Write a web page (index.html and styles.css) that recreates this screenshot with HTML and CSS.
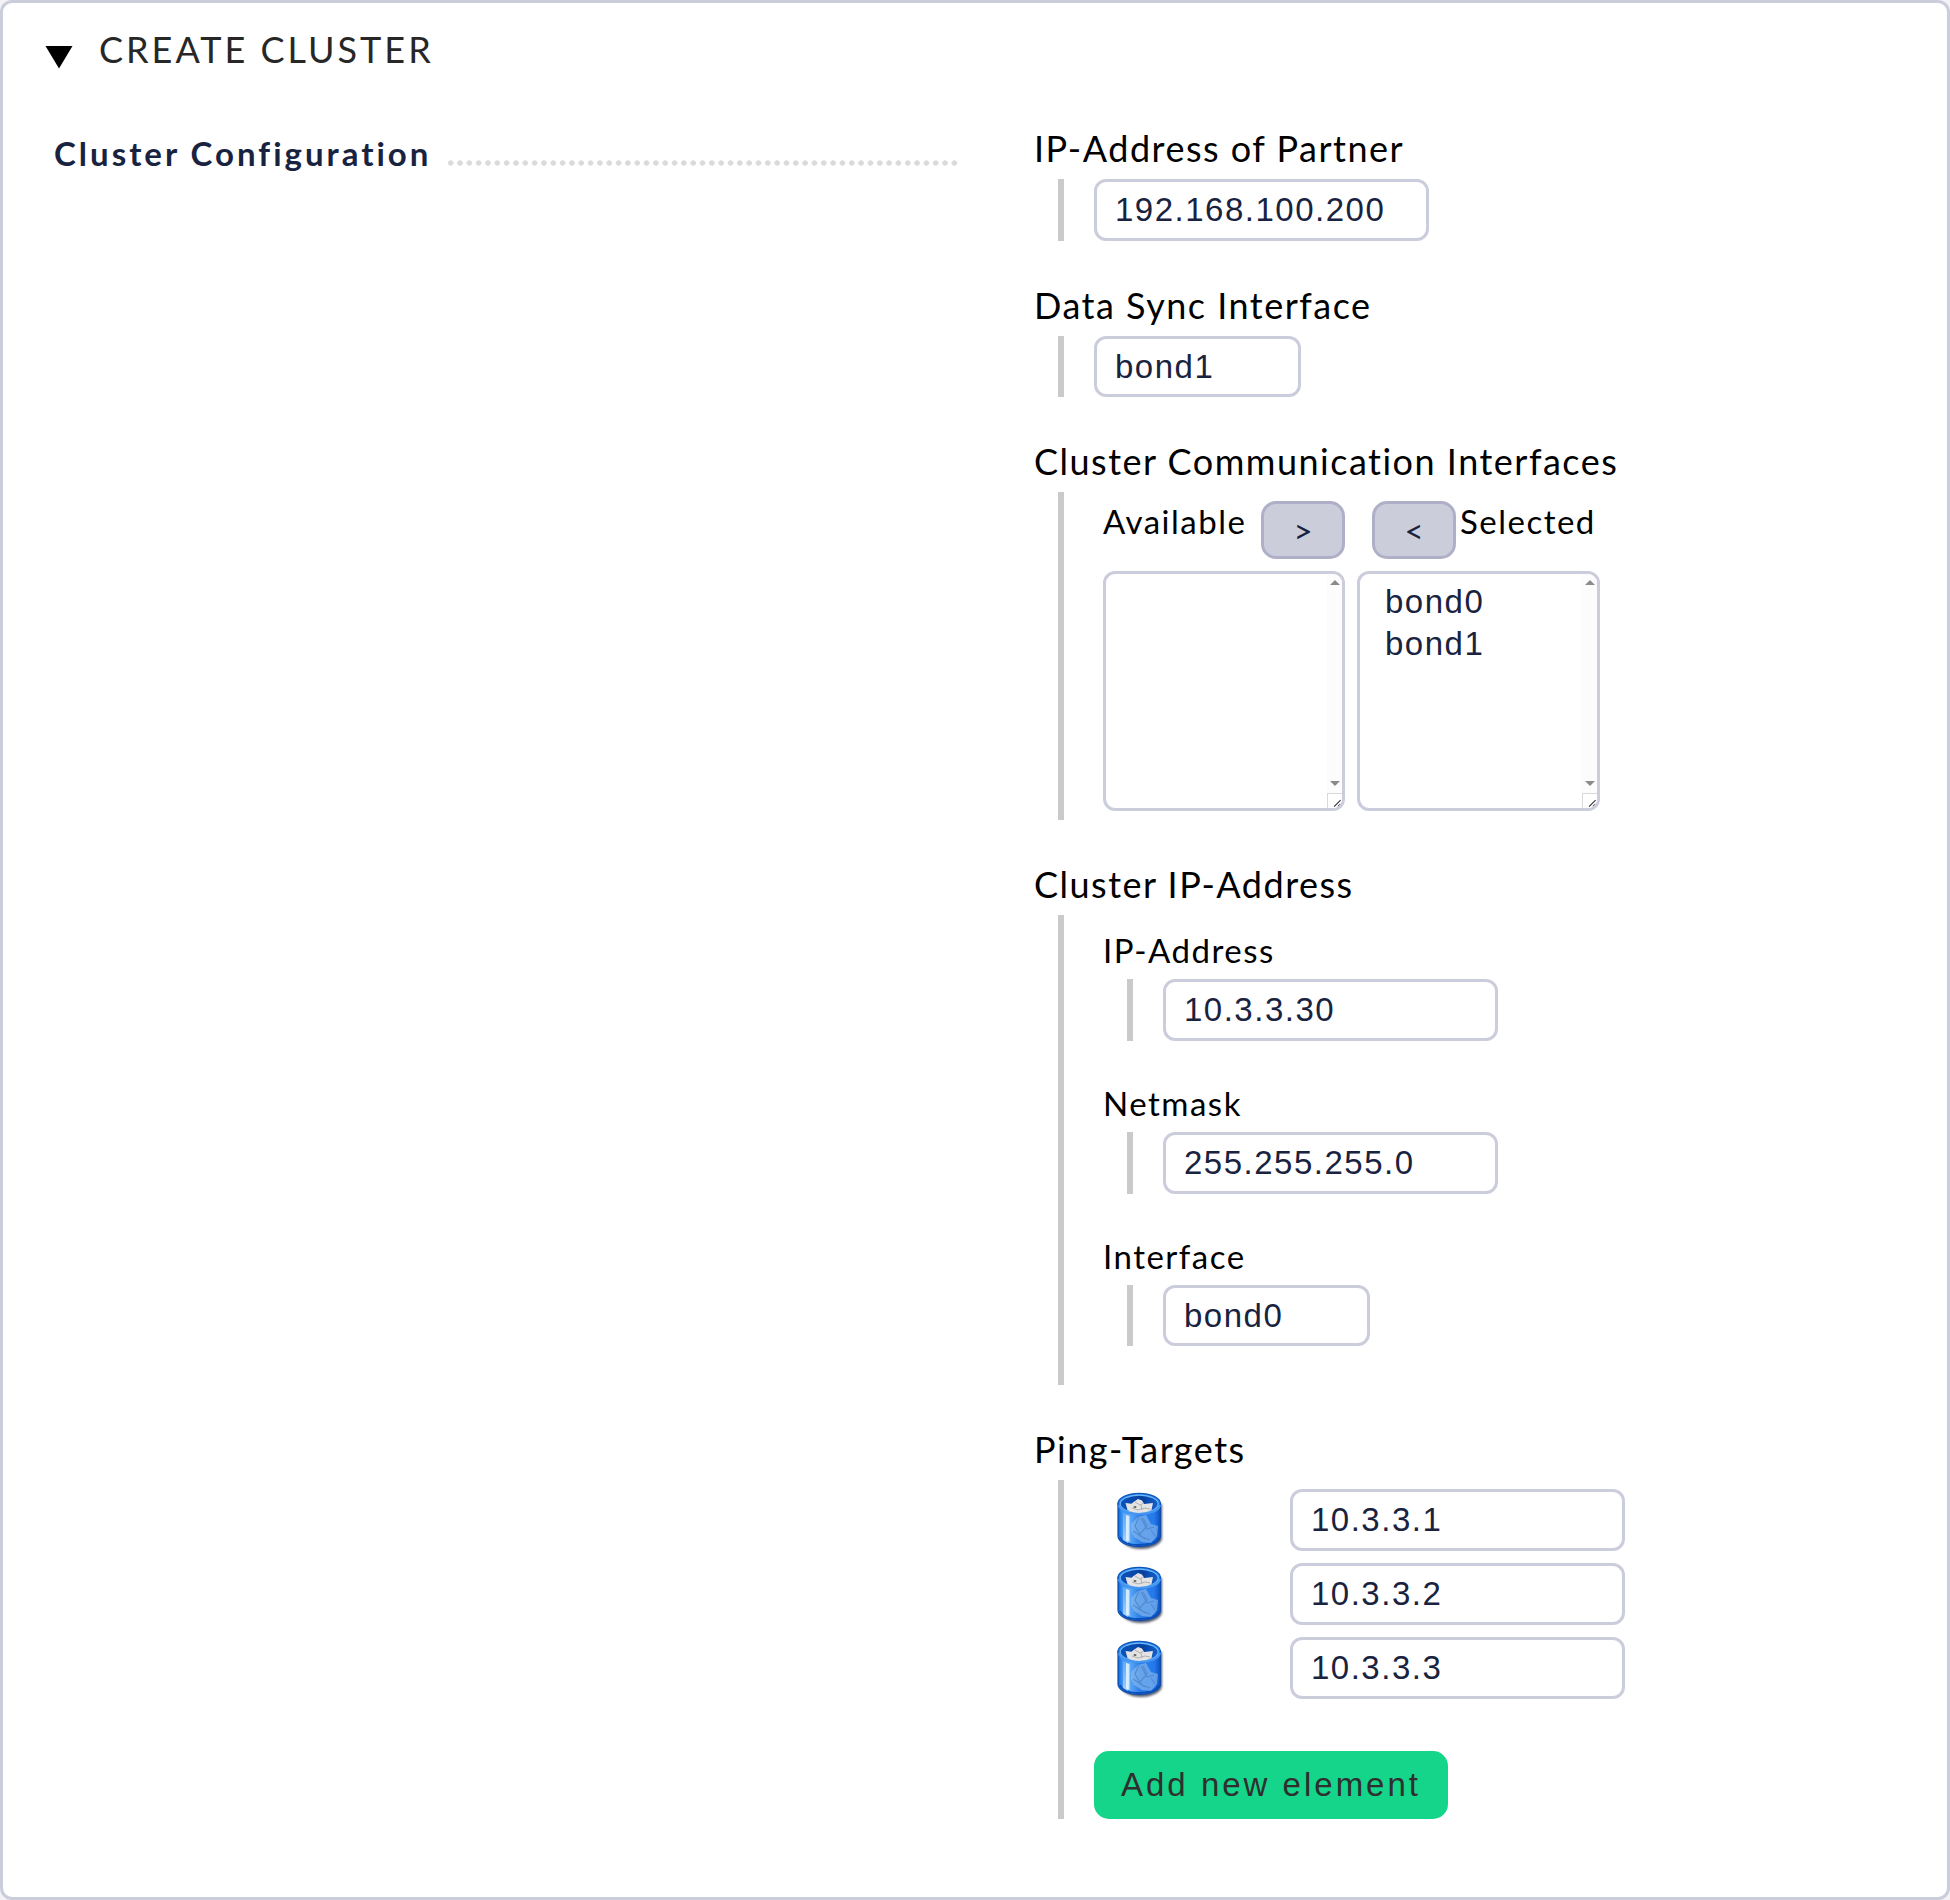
FILE: index.html
```html
<!DOCTYPE html>
<html lang="en">
<head>
<meta charset="utf-8">
<title>Create Cluster</title>
<link rel="stylesheet" href="styles.css">
</head>
<body>
<svg class="defs" width="0" height="0" aria-hidden="true">
  <defs>
    <linearGradient id="can-body" x1="0" x2="1" y1="0" y2="0">
      <stop offset="0" stop-color="#0d62d8"/><stop offset=".1" stop-color="#3d95f4"/>
      <stop offset=".28" stop-color="#5ba8f6"/><stop offset=".5" stop-color="#2f80e6"/>
      <stop offset=".85" stop-color="#2579ec"/><stop offset="1" stop-color="#0b50bc"/>
    </linearGradient>
    <linearGradient id="can-inside" x1="0" x2="1" y1="0" y2="0">
      <stop offset="0" stop-color="#0b54bd"/><stop offset=".6" stop-color="#07409f"/><stop offset="1" stop-color="#1263cf"/>
    </linearGradient>
    <linearGradient id="can-shine" x1="0" x2="0" y1="0" y2="1">
      <stop offset="0" stop-color="#a5d2fc" stop-opacity=".5"/><stop offset="1" stop-color="#e2f2ff"/>
    </linearGradient>
    <filter id="soft" x="-20%" y="-20%" width="140%" height="140%"><feGaussianBlur stdDeviation="1"/></filter>
    <filter id="hazy" x="-20%" y="-20%" width="140%" height="140%"><feGaussianBlur stdDeviation=".6"/></filter>
    <symbol id="trash" viewBox="0 0 50 60">
      <path d="M6 13v34c0 6 9 11 20 11s21-5 21-11V13z" fill="#222a3c" opacity=".75" filter="url(#soft)"/>
      <path d="M3 12v33c0 6 9 10.500 21 10.500S45.500 51 45.500 45V12z" fill="url(#can-body)" stroke="#0d4cab" stroke-width="1.200"/>
      <path d="M5 46c2 5 9 8 19 8s18-3 20-8" fill="none" stroke="#0a4fbc" stroke-width="2"/>
      <path d="M8 22l5 2v28l-5-3z" fill="url(#can-shine)" opacity=".6"/>
      <path d="M11 24l3.500 1v26l-3.500-1.500z" fill="#e6f4ff" opacity=".85"/>
      <g filter="url(#hazy)">
        <path d="M16 33l7-7 8-2 5 9 7 2-1 10-6 7-9-1-8-5-3-6z" fill="#8dbcec" opacity=".6"/>
        <path d="M24 26l-4 9 5 9 5 4m-4-21l6 11 7-2m-21 4l9 6 8 3m-7-22l4 8-7 8m11-4l4 6" fill="none" stroke="#4c87cf" stroke-width="1.200" opacity=".85"/>
      </g>
      <ellipse cx="24.200" cy="12.500" rx="21.200" ry="10.200" fill="#2a82ea" stroke="#0e55bb" stroke-width="1.200"/>
      <ellipse cx="24.200" cy="13" rx="19" ry="8.800" fill="url(#can-inside)" stroke="#6cb6fb" stroke-width="1.200"/>
      <path d="M10.500 12l6 .8 2-1.800 4.500-3 4 1.500 2 3.500 9-1-1.500 7c-3 2-8 3-12.500 3s-9-1-11.500-3z" fill="#e3e3e3"/>
      <path d="M20 11l5 3 4-2M17 17l6 2 7-2 5 1M26 14l1 5" fill="none" stroke="#b0b0b0" stroke-width="1"/>
      <ellipse cx="20" cy="16" rx="1.500" ry="1" fill="#606060"/>
      <path d="M4 14c1 5.500 9 9 20 9S44 19.500 45 14" fill="none" stroke="#4595f2" stroke-width="2.200"/>
    </symbol>
    <symbol id="grip" viewBox="0 0 15 15">
      <path d="M6.500 13.500l7-7M10.500 13.500l3-3" stroke="#333" stroke-width="1.200" fill="none"/>
    </symbol>
  </defs>
</svg>
<main class="panel">
  <h1 class="title"><svg class="caret" viewBox="0 0 28 24"><path d="M.5 1h27L14 23.500z"/></svg>CREATE CLUSTER</h1>
  <div class="columns">
    <div class="legend"><span class="legend-text">Cluster Configuration</span><span class="leader"></span></div>
    <div class="form">
      <section class="field">
        <h2 class="label">IP-Address of Partner</h2>
        <div class="group"><div class="input">192.168.100.200</div></div>
      </section>
      <section class="field">
        <h2 class="label">Data Sync Interface</h2>
        <div class="group"><div class="input select">bond1</div></div>
      </section>
      <section class="field">
        <h2 class="label">Cluster Communication Interfaces</h2>
        <div class="group transfer">
          <div class="side">
            <div class="side-head"><span>Available</span><span class="move">&gt;</span></div>
            <div class="list"><div class="options"></div><div class="scroll"><i class="up"></i><i class="down"></i><svg class="grip"><use href="#grip"/></svg></div></div>
          </div>
          <div class="side wide">
            <div class="side-head right"><span class="move">&lt;</span><span>Selected</span></div>
            <div class="list"><div class="options"><div>bond0</div><div>bond1</div></div><div class="scroll"><i class="up"></i><i class="down"></i><svg class="grip"><use href="#grip"/></svg></div></div>
          </div>
        </div>
      </section>
      <section class="field">
        <h2 class="label">Cluster IP-Address</h2>
        <div class="group nested">
          <section class="field">
            <h3 class="label small">IP-Address</h3>
            <div class="group"><div class="input">10.3.3.30</div></div>
          </section>
          <section class="field">
            <h3 class="label small">Netmask</h3>
            <div class="group"><div class="input">255.255.255.0</div></div>
          </section>
          <section class="field">
            <h3 class="label small">Interface</h3>
            <div class="group"><div class="input select">bond0</div></div>
          </section>
        </div>
      </section>
      <section class="field">
        <h2 class="label">Ping-Targets</h2>
        <div class="group targets">
          <div class="target"><svg class="trash"><use href="#trash"/></svg><div class="input">10.3.3.1</div></div>
          <div class="target"><svg class="trash"><use href="#trash"/></svg><div class="input">10.3.3.2</div></div>
          <div class="target"><svg class="trash"><use href="#trash"/></svg><div class="input">10.3.3.3</div></div>
          <div class="add">Add new element</div>
        </div>
      </section>
    </div>
  </div>
</main>
</body>
</html>
```
FILE: styles.css
```css
* { box-sizing: border-box; }
body { margin: 0; background: #f3f3f6; font-family: Lato, sans-serif; color: #000; }
.defs { display: block; }
.panel { height: 1900px; border: 3px solid #cccddc; border-radius: 12px; background: #fff; }
.title { display: flex; margin: 0; height: 123px; padding: 24px 0 0 42px; font-size: 36px; font-weight: 400; line-height: 44px; letter-spacing: 3px; color: #272727; }
.caret { width: 28px; height: 24px; margin: 18px 26px 0 0; }
.columns { display: flex; }
.legend { display: flex; width: 1031px; padding: 7px 76px 0 51px; font-size: 33px; font-weight: 700; line-height: 40px; letter-spacing: 3px; color: #19233f; white-space: nowrap; }
.leader { flex: none; width: 514px; height: 6px; margin: 27px 0 0 14.600px; background: radial-gradient(circle, #dadada 2.400px, transparent 3px) 0 0 / 9.340px 6px repeat-x; }
.form { width: 800px; }
.field { margin-bottom: 42px; }
.label { margin: 0; padding-bottom: 9px; font-size: 36px; font-weight: 400; line-height: 44px; letter-spacing: 1.5px; white-space: nowrap; }
.label.small { font-size: 33px; line-height: 40px; }
.group { margin-left: 24px; padding-left: 30px; border-left: 6px solid #cacaca; }
.input { width: 335px; height: 62px; padding-left: 18px; border: 3px solid #cccddc; border-radius: 12px; font: 33px/56px "Liberation Sans", sans-serif; letter-spacing: 1.5px; color: #19233f; }
.select { width: 207px; height: 61px; line-height: 55px; }
.transfer { display: flex; gap: 12px; height: 328px; padding: 9px 0 0 39px; }
.side { width: 242px; }
.side.wide { width: 243px; }
.side-head { display: flex; justify-content: space-between; height: 70px; font-size: 33px; line-height: 40px; letter-spacing: 1.5px; }
.side-head.right { justify-content: flex-start; gap: 4px; padding-left: 15px; }
.move { width: 84px; height: 58px; border: 3px solid #afb0c8; border-radius: 15px; background: #cccddb; font-size: 33px; line-height: 52px; letter-spacing: 0; text-align: center; color: #19233f; }
.list { display: flex; justify-content: space-between; height: 240px; border: 3px solid #cccddc; border-radius: 12px; overflow: hidden; }
.options { padding: 7px 0 0 25px; font: 33px/42px "Liberation Sans", sans-serif; letter-spacing: 1.5px; color: #19233f; }
.scroll { display: flex; flex-direction: column; align-items: center; width: 15px; background: #fcfcfc; }
.up, .down { border: 5px solid transparent; border-top-width: 0; border-bottom: 5px solid #8b8b8b; margin-top: 6px; }
.down { border-top: 5px solid #8b8b8b; border-bottom-width: 0; margin-top: auto; margin-bottom: 7px; }
.grip { flex: none; width: 15px; height: 15px; border: 1px solid #d9d9d9; border-right: 0; border-bottom: 0; background: #fff; }
.nested { height: 470px; padding: 15px 0 0 39px; }
.targets { height: 339px; padding-top: 9px; }
.target { display: flex; justify-content: space-between; width: 531px; margin-bottom: 12px; }
.trash { width: 50px; height: 60px; margin: 2px 0 0 21px; }
.add { width: 354px; height: 68px; margin-top: 52px; padding-left: 27px; border-radius: 15px; background: #15d58a; font: 33px/67px "Liberation Sans", sans-serif; letter-spacing: 3px; color: #2f2f2f; white-space: nowrap; }
```
